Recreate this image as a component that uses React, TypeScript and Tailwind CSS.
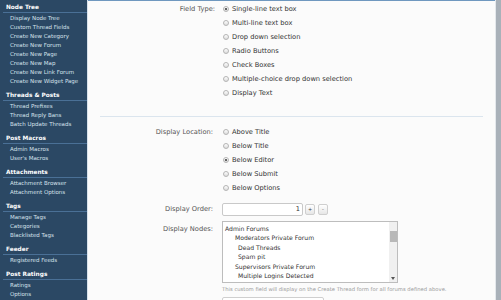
import React from "react";

const groups: { title: string; items: string[] }[] = [
  {
    title: "Node Tree",
    items: [
      "Display Node Tree",
      "Custom Thread Fields",
      "Create New Category",
      "Create New Forum",
      "Create New Page",
      "Create New Map",
      "Create New Link Forum",
      "Create New Widget Page",
    ],
  },
  { title: "Threads & Posts", items: ["Thread Prefixes", "Thread Reply Bans", "Batch Update Threads"] },
  { title: "Post Macros", items: ["Admin Macros", "User's Macros"] },
  { title: "Attachments", items: ["Attachment Browser", "Attachment Options"] },
  { title: "Tags", items: ["Manage Tags", "Categories", "Blacklisted Tags"] },
  { title: "Feeder", items: ["Registered Feeds"] },
  { title: "Post Ratings", items: ["Ratings", "Options"] },
];

function Radio({ checked }: { checked?: boolean }) {
  return (
    <span className="w-[6px] h-[6px] rounded-full border border-[#b4b4b4] bg-gradient-to-b from-[#ffffff] to-[#dcdcdc] flex items-center justify-center shrink-0">
      {checked && <span className="w-[2px] h-[2px] rounded-full bg-[#333]" />}
    </span>
  );
}

function RadioList({ options, selected }: { options: string[]; selected: number }) {
  return (
    <div className="flex flex-col">
      {options.map((o, i) => (
        <div key={o} className="h-[14px] flex items-center gap-[3px]">
          <Radio checked={i === selected} />
          <span className="text-[#333]">{o}</span>
        </div>
      ))}
    </div>
  );
}

export default function App() {
  const nodes: { t: string; pl: string }[] = [
    { t: "Admin Forums", pl: "pl-[2px]" },
    { t: "Moderators Private Forum", pl: "pl-[12px]" },
    { t: "Dead Threads", pl: "pl-[15px]" },
    { t: "Spam pit", pl: "pl-[15px]" },
    { t: "Supervisors Private Forum", pl: "pl-[12px]" },
    { t: "Multiple Logins Detected", pl: "pl-[15px]" },
  ];
  return (
    <div
      className="w-[501px] h-[300px] overflow-hidden flex bg-[#fbfbfb] antialiased"
      style={{ fontFamily: '"DejaVu Sans", Verdana, sans-serif' }}
    >
      <aside className="w-[87px] shrink-0 h-full bg-[#2b4864] pt-[3px] pl-[3px] text-[5.5px]">
        {groups.map((g) => (
          <div key={g.title} className="mb-[5px]">
            <div className="h-[10px] leading-[9px] border-b border-[#4a7096] pl-[3px] font-bold text-white text-[5.8px]">
              {g.title}
            </div>
            <ul className="pt-[1px]">
              {g.items.map((it) => (
                <li key={it} className="h-[9px] leading-[9px] pl-[7px] text-[#d6e2ec] whitespace-nowrap">
                  {it}
                </li>
              ))}
            </ul>
          </div>
        ))}
      </aside>
      <div className="w-[1px] h-full bg-[#d7e2ec]" />
      <main className="flex-1 h-full border-t border-[#6f98bf] text-[6.7px] text-[#555]">
        <div className="pt-[1px]">
          <div className="flex">
            <div className="w-[127px] text-right h-[14px] leading-[14px]">Field Type:</div>
            <div className="pl-[8px]">
              <RadioList
                selected={0}
                options={[
                  "Single-line text box",
                  "Multi-line text box",
                  "Drop down selection",
                  "Radio Buttons",
                  "Check Boxes",
                  "Multiple-choice drop down selection",
                  "Display Text",
                ]}
              />
            </div>
          </div>
          <div className="mx-[12px] mt-[16px] mb-[8px] h-[1px] bg-[#dbe5ee]" />
          <div className="flex">
            <div className="w-[125px] text-right h-[14px] leading-[14px]">Display Location:</div>
            <div className="pl-[10px]">
              <RadioList
                selected={2}
                options={["Above Title", "Below Title", "Below Editor", "Below Submit", "Below Options"]}
              />
            </div>
          </div>
          <div className="flex mt-[8px] items-center">
            <div className="w-[125px] text-right">Display Order:</div>
            <div className="pl-[9px] flex items-center gap-[2px]">
              <div className="w-[81px] h-[13px] border border-[#c9c9c9] rounded-[2px] bg-white text-right pr-[2px] leading-[11px] text-[#333]">
                1
              </div>
              <div className="w-[10px] h-[11px] border border-[#cfcfcf] rounded-[2px] bg-gradient-to-b from-white to-[#e6e6e6] text-[5px] leading-[9px] text-center text-[#444]">
                +
              </div>
              <div className="w-[10px] h-[11px] ml-[1px] border border-[#cfcfcf] rounded-[2px] bg-gradient-to-b from-white to-[#e6e6e6] text-[5px] leading-[9px] text-center text-[#444]">
                -
              </div>
            </div>
          </div>
          <div className="flex mt-[5px]">
            <div className="w-[125px] text-right pt-[3px]">Display Nodes:</div>
            <div className="pl-[9px]">
              <div className="w-[176px] h-[62px] border border-[#bdbdbd] bg-white flex text-[#333] text-[6.1px]">
                <div className="flex-1 pt-[2px]">
                  {nodes.map((n) => (
                    <div key={n.t} className={`h-[9.4px] leading-[9.4px] whitespace-nowrap ${n.pl}`}>
                      {n.t}
                    </div>
                  ))}
                </div>
                <div className="w-[8px] h-full bg-[#f0f0f0] flex flex-col items-center pt-[9px]">
                  <div className="w-[7px] h-[11px] bg-[#b8b8b8]" />
                  <div className="flex-1" />
                  <div className="mb-[2px] w-0 h-0 border-l-[2px] border-r-[2px] border-t-[3px] border-l-transparent border-r-transparent border-t-[#555]" />
                </div>
              </div>
              <div className="mt-[3px] text-[5.25px] text-[#9a9a9a] whitespace-nowrap">
                This custom field will display on the Create Thread form for all forums defined above.
              </div>
              <div className="mt-[3px] w-[102px] h-[10px] border border-[#cfcfcf] rounded-[2px] bg-white" />
            </div>
          </div>
        </div>
      </main>
      <div className="w-[6px] h-full shrink-0 border-l border-[#e4e8ec] bg-[#a9b1b9]" />
    </div>
  );
}
